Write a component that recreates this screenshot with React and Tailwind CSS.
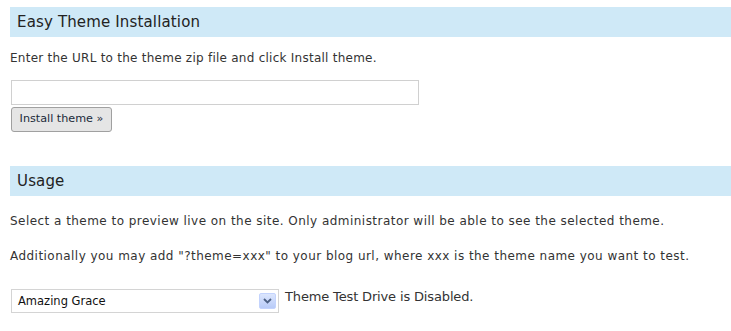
const Header = ({children}) => (
    <div className="bg-[#cfe9f7] h-[30px] flex items-center pl-[7px] text-[15px] text-[#222] tracking-[0.15px]">
        {children}
    </div>
);

const App = () => {
    return (
        <div className="bg-white min-h-[331px] pl-[10px] pt-[7px] font-['DejaVu_Sans',sans-serif] text-[12px] text-[#333]">
            <Header>Easy Theme Installation</Header>
            <p className="mt-[14px] leading-[14px] tracking-[0.25px]">Enter the URL to the theme zip file and click Install theme.</p>
            <div className="mt-[15px] ml-px">
                <input type="text" className="block w-[408px] h-[25px] border border-[#d0d0d0] bg-white outline-none"/>
                <button className="mt-[2px] h-[25px] w-[101px] border border-[#a0a0a0] rounded-[3px] bg-[#e5e5e5] text-[#1a2a3a] text-[11.2px] flex items-center justify-center">
                    Install theme »
                </button>
            </div>
            <div className="mt-[34px]">
                <Header>Usage</Header>
            </div>
            <p className="mt-[18px] leading-[14px] tracking-[0.46px]">Select a theme to preview live on the site. Only administrator will be able to see the selected theme.</p>
            <p className="mt-[21px] leading-[14px] tracking-[0.46px]">Additionally you may add "?theme=xxx" to your blog url, where xxx is the theme name you want to test.</p>
            <div className="mt-[26px] ml-px flex items-start gap-[6px]">
                <div className="w-[268px] h-[24px] border border-[#d4d4d4] flex items-center justify-between pl-[6px] pr-[2px] text-[#111] text-[11.5px]">
                    <span className="mt-[2px]">Amazing Grace</span>
                    <span className="w-[17px] h-[16px] rounded-[2px] border border-[#c3d3fd] bg-gradient-to-b from-[#dce6fd] to-[#b8cbf8] flex items-center justify-center">
                        <svg width="9" height="6" viewBox="0 0 9 6">
                            <path d="M1 1 L4.5 4.5 L8 1" stroke="#4d6185" strokeWidth="1.8" fill="none"/>
                        </svg>
                    </span>
                </div>
                <span className="text-[13px] leading-[14px] tracking-[-0.15px] mt-px">Theme Test Drive is Disabled.</span>
            </div>
        </div>
    );
};

export default App;
